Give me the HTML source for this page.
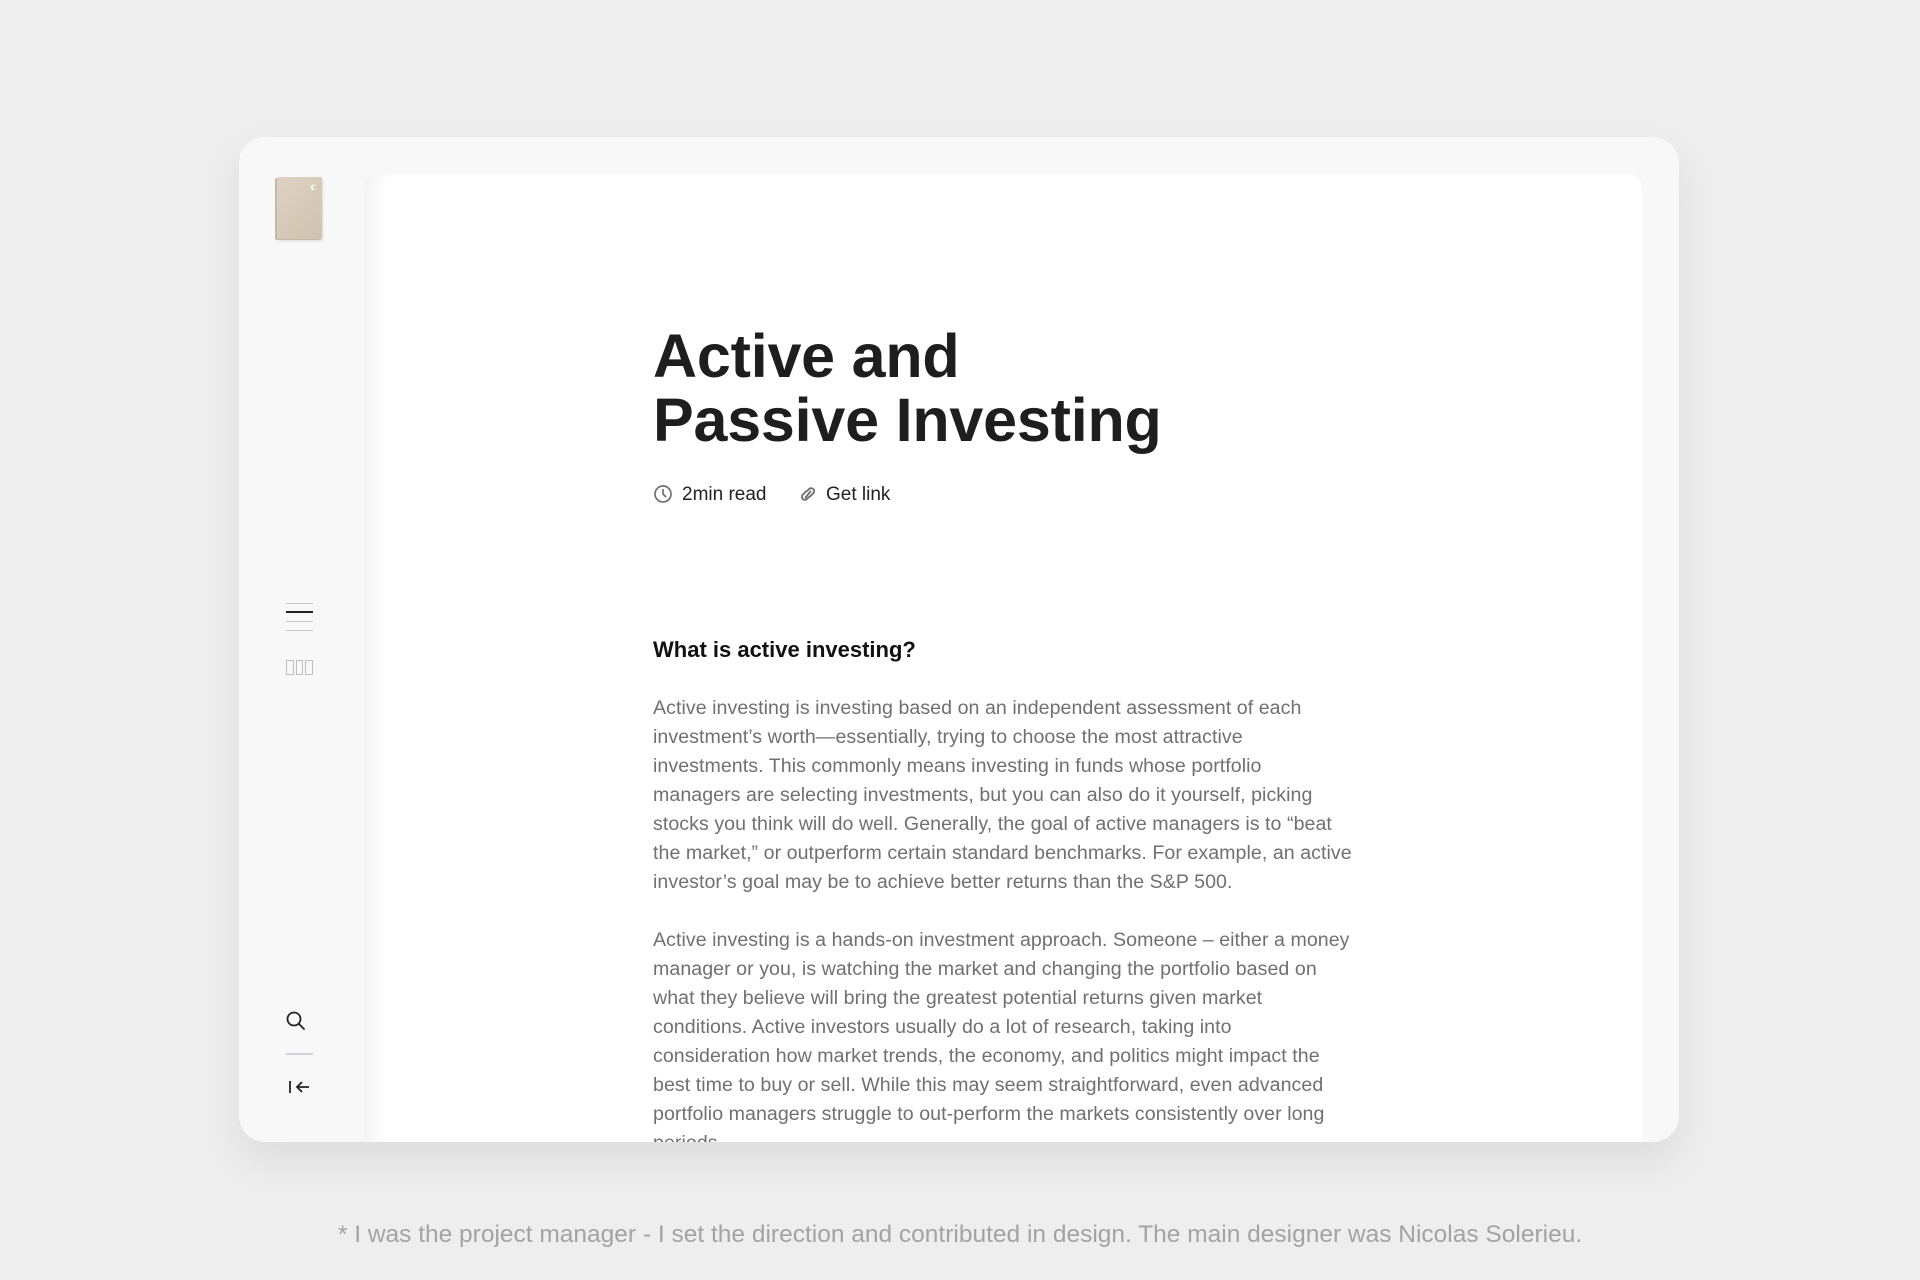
<!DOCTYPE html>
<html><head><meta charset="utf-8"><style>
*{margin:0;padding:0;box-sizing:border-box}
body{width:1920px;height:1280px;background:#eeeeee;font-family:"Liberation Sans",sans-serif;position:relative;overflow:hidden}
.card{position:absolute;left:239px;top:137px;width:1440px;height:1005px;background:#f8f8f8;border-radius:26px;box-shadow:0 18px 40px rgba(0,0,0,0.08);overflow:hidden}
.panel{position:absolute;left:125px;top:37px;width:1278px;height:1000px;background:#fff;border-radius:14px 14px 0 0;box-shadow:inset 22px 0 18px -12px rgba(0,0,0,0.05)}
.logo{position:absolute;left:38px;top:40px;width:45px;height:62px;background:linear-gradient(135deg,#ddd2c2,#cfc3b0);border-radius:2px;box-shadow:-2px 1px 0 #c4b7a3,1px 2px 2px rgba(0,0,0,0.12)}
.logo span{position:absolute;right:6px;top:2px;color:#fff;font-family:"Liberation Serif",serif;font-weight:bold;font-size:12px}
.ln{position:absolute;left:47px;width:27px;height:1px;background:#c8c8cc}
.abs{position:absolute}
.t{position:absolute;left:289px;font-weight:bold;color:#1e1e1e;font-size:61px;line-height:64px;letter-spacing:-0.2px}
.p{position:absolute;left:289px;color:#6f6f75;font-size:19.6px;line-height:29px;white-space:nowrap;letter-spacing:0.05px}
.foot{position:absolute;left:0;width:1920px;top:1221px;text-align:center;color:#a3a3a3;font-size:24.5px}
</style></head><body>
<div class="card">
  <div class="logo"><span>c</span></div>
  <div class="ln" style="top:466px"></div>
  <div class="ln" style="top:474px;height:2px;background:#222"></div>
  <div class="ln" style="top:484px"></div>
  <div class="ln" style="top:493px"></div>
  <div class="abs" style="left:47px;top:523px;width:27px;height:15px;display:flex;gap:2px">
    <div style="flex:1;border:1px solid #bdbdc2"></div><div style="flex:1;border:1px solid #bdbdc2"></div><div style="flex:1;border:1px solid #bdbdc2"></div></div>
  <svg class="abs" style="left:46px;top:873px" width="22" height="22" viewBox="0 0 22 22"><circle cx="9" cy="9" r="6.5" fill="none" stroke="#222" stroke-width="1.8"/><path d="M14 14l5 5" stroke="#222" stroke-width="1.8" stroke-linecap="round"/></svg>
  <div class="ln" style="top:916px;height:2px;background:#d2d2d8"></div>
  <svg class="abs" style="left:49px;top:942px" width="24" height="16" viewBox="0 0 24 16"><path d="M2 2v12M21 8H9M14 3L9 8l5 5" fill="none" stroke="#222" stroke-width="1.8"/></svg>
  <div class="panel">
    <div class="t" style="top:150px">Active and<br>Passive Investing</div>
    <svg class="abs" style="left:289px;top:310px" width="20" height="20" viewBox="0 0 20 20"><circle cx="10" cy="10" r="8" fill="none" stroke="#6f6f75" stroke-width="1.7"/><path d="M10 5v5l3 3" fill="none" stroke="#6f6f75" stroke-width="1.7"/></svg>
    <div class="abs" style="left:318px;top:310px;font-size:19px;color:#222">2min read</div>
    <svg class="abs" style="left:433px;top:310px" width="22" height="20" viewBox="0 0 22 20"><g fill="none" stroke="#6f6f75" stroke-width="1.9" stroke-linecap="round"><path d="M9 7.5L5.5 11a3 3 0 0 0 4.2 4.2L12 13"/><path d="M13 12.5L16.5 9a3 3 0 0 0-4.2-4.2L10 7"/><path d="M8.5 13.5l5-6"/></g></svg>
    <div class="abs" style="left:462px;top:310px;font-size:19px;color:#222">Get link</div>
    <div class="abs" style="left:289px;top:463px;font-size:22px;font-weight:bold;color:#111">What is active investing?</div>
    <div class="p" style="top:520px">Active investing is investing based on an independent assessment of each<br>investment’s worth—essentially, trying to choose the most attractive<br>investments. This commonly means investing in funds whose portfolio<br>managers are selecting investments, but you can also do it yourself, picking<br>stocks you think will do well. Generally, the goal of active managers is to “beat<br>the market,” or outperform certain standard benchmarks. For example, an active<br>investor’s goal may be to achieve better returns than the S&amp;P 500.</div>
    <div class="p" style="top:752px">Active investing is a hands-on investment approach. Someone – either a money<br>manager or you, is watching the market and changing the portfolio based on<br>what they believe will bring the greatest potential returns given market<br>conditions. Active investors usually do a lot of research, taking into<br>consideration how market trends, the economy, and politics might impact the<br>best time to buy or sell. While this may seem straightforward, even advanced<br>portfolio managers struggle to out-perform the markets consistently over long<br>periods.</div>
  </div>
</div>
<div class="foot">* I was the project manager - I set the direction and contributed in design. The main designer was Nicolas Solerieu.</div>
</body></html>
